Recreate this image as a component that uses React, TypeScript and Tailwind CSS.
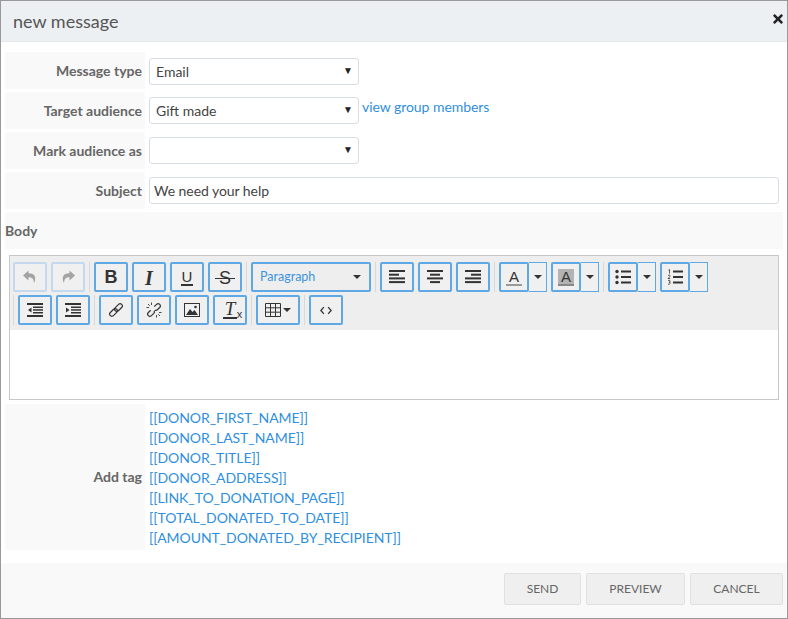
import type { ReactNode } from 'react'
import { FaTimes } from 'react-icons/fa'

const tags = [
  '[[DONOR_FIRST_NAME]]',
  '[[DONOR_LAST_NAME]]',
  '[[DONOR_TITLE]]',
  '[[DONOR_ADDRESS]]',
  '[[LINK_TO_DONATION_PAGE]]',
  '[[TOTAL_DONATED_TO_DATE]]',
  '[[AMOUNT_DONATED_BY_RECIPIENT]]',
]

function Caret() {
  return <span className="h-0 w-0 border-x-[4px] border-t-[4px] border-x-transparent border-t-[#333]" />
}

function Sep() {
  return <div className="mx-[4px] h-[30px] w-px bg-[#d9d9d9]" />
}

function Btn(props: { children: ReactNode; disabled?: boolean; w?: string }) {
  return (
    <button
      className={`flex h-[30px] items-center justify-center rounded-[2px] border-2 bg-[#f0f0f0] text-[#333] ${props.w ?? 'w-[34px]'} ${
        props.disabled ? 'border-[#c4d9ee]' : 'border-[#5fa8e6]'
      }`}
    >
      {props.children}
    </button>
  )
}

function SplitBtn(props: { children: ReactNode }) {
  return (
    <div className="flex">
      <Btn w="w-[30px]">{props.children}</Btn>
      <div className="flex h-[30px] w-[18px] items-center justify-center border border-l-0 border-[#5fa8e6] bg-[#f0f0f0]">
        <Caret />
      </div>
    </div>
  )
}

function Lines(props: { rows: [number, number][] }) {
  return (
    <svg width="16" height="16" viewBox="0 0 16 16" fill="#333">
      {props.rows.map(([x, w], i) => (
        <rect key={i} x={x} y={1 + i * 3.7} width={w} height="2" />
      ))}
    </svg>
  )
}

function Indent(props: { out?: boolean }) {
  return (
    <svg width="16" height="16" viewBox="0 0 16 16" fill="#333">
      <rect x="0" y="1" width="16" height="2" />
      <rect x="6" y="4.500" width="10" height="1.500" />
      <rect x="6" y="7.200" width="10" height="1.500" />
      <rect x="6" y="10" width="10" height="1.500" />
      <rect x="0" y="13" width="16" height="2" />
      <path d={props.out ? 'M4.500 5.500v5L1 8z' : 'M1 5.500v5L4.500 8z'} />
    </svg>
  )
}

function ListIcon(props: { numbered?: boolean }) {
  return (
    <svg width="16" height="16" viewBox="0 0 16 16" fill="#333">
      <rect x="6" y="1.500" width="10" height="2" />
      <rect x="6" y="7" width="10" height="2" />
      <rect x="6" y="12.500" width="10" height="2" />
      {props.numbered ? (
        <g fill="none" stroke="#333" strokeWidth="0.800">
          <path d="M1.500 1l1-.5v4" />
          <path d="M1 6.500q1.500-1 2 0t-2 3h2.200" />
          <path d="M1 11.500q2-1 2 .7t-1 .8q1.500 0 1 1.500t-2 .5" />
        </g>
      ) : (
        <g>
          <circle cx="2" cy="2.500" r="1.700" />
          <circle cx="2" cy="8" r="1.700" />
          <circle cx="2" cy="13.500" r="1.700" />
        </g>
      )}
    </svg>
  )
}

function UndoIcon(props: { redo?: boolean }) {
  return (
    <svg width="16" height="16" viewBox="0 0 16 16" fill="#a3a3a3" className={props.redo ? '-scale-x-100' : ''}>
      <path d="M6.500 1.500L1 6.500l5.500 5V8.300c3.500 0 5.200 1.500 5.500 6 2.500-5.500 1.500-10-5.500-10z" />
    </svg>
  )
}

function FieldRow(props: { label: string; children: ReactNode }) {
  return (
    <div className="flex h-[37px] items-center">
      <div className="flex h-full w-[140px] shrink-0 items-center justify-end bg-[#f9f9f9] pr-[3px] text-[14px] font-bold text-[#666]">
        {props.label}
      </div>
      <div className="flex min-w-0 flex-1 items-center pl-[4px]">{props.children}</div>
    </div>
  )
}

function Select(props: { value?: string; className?: string }) {
  return (
    <div
      className={`flex w-[210px] items-center justify-between rounded-[3px] border border-[#d8dde3] bg-white pr-[5px] pl-[6px] text-[14px] text-[#444] ${props.className ?? 'h-[27px]'}`}
    >
      <span>{props.value}</span>
      <span className="mb-[4px] text-[10px] leading-none text-[#222]">▼</span>
    </div>
  )
}

export default function App() {
  return (
    <div className="flex h-[619px] w-[788px] flex-col border border-[#999] bg-white font-['Lato',sans-serif]">
      <div className="flex h-[41px] shrink-0 items-center justify-between border-b border-[#e6e8ea] bg-[#edf0f3] pr-[2px] pb-[4px] pl-[12px]">
        <h1 className="mt-[4px] text-[18px] text-[#555]">new message</h1>
        <FaTimes size={14} className="text-[#222]" />
      </div>

      <div className="flex flex-1 flex-col gap-[3px] pt-[10px] pr-[4px] pl-[4px]">
        <FieldRow label="Message type">
          <Select value="Email" className="mt-[2px] h-[27px]" />
        </FieldRow>
        <FieldRow label="Target audience">
          <Select value="Gift made" />
          <a className="mb-[9px] ml-[3px] text-[14px] tracking-[-0.05px] text-[#2f8fe0]">view group members</a>
        </FieldRow>
        <FieldRow label="Mark audience as">
          <Select />
        </FieldRow>
        <FieldRow label="Subject">
          <div className="flex h-[27px] w-[630px] items-center rounded-[3px] border border-[#d8dde3] pl-[4px] text-[14px] tracking-[-0.05px] text-[#444]">
            We need your help
          </div>
        </FieldRow>
        <div className="flex h-[37px] items-center bg-[#f9f9f9] text-[14px] font-bold text-[#666]">Body</div>

        <div className="mt-[3px] mr-[4px] ml-[4px] flex h-[145px] flex-col border border-[#c8c8c8]">
          <div className="flex h-[74px] flex-col gap-[3px] bg-[#eeeeee] pt-[6px] pl-[3px]">
            <div className="flex items-center">
              <div className="flex gap-[4px]">
                <Btn disabled>
                  <UndoIcon />
                </Btn>
                <Btn disabled>
                  <UndoIcon redo />
                </Btn>
              </div>
              <Sep />
              <div className="flex gap-[4px]">
                <Btn>
                  <span className="pt-px font-['Liberation_Sans',sans-serif] text-[18px] font-bold">B</span>
                </Btn>
                <Btn>
                  <span className="pt-px font-['Liberation_Serif',serif] text-[20px] font-bold italic">I</span>
                </Btn>
                <Btn>
                  <span className="mt-px border-b-2 border-[#333] px-px font-['Liberation_Sans',sans-serif] text-[15px] leading-[15px]">U</span>
                </Btn>
                <Btn>
                  <span className="relative mt-px font-['Liberation_Sans',sans-serif] text-[18px] leading-none">
                    S
                    <span className="absolute top-[9px] left-[-4px] h-px w-[20px] bg-[#333]" />
                  </span>
                </Btn>
              </div>
              <Sep />
              <div className="flex h-[30px] w-[120px] items-center justify-between rounded-[2px] border-2 border-[#5fa8e6] pr-[8px] pl-[7px] text-[12.5px] text-[#3d94de]">
                <span className="pt-px">Paragraph</span>
                <Caret />
              </div>
              <Sep />
              <div className="flex gap-[4px]">
                <Btn>
                  <Lines rows={[[0, 16], [0, 10], [0, 16], [0, 16]]} />
                </Btn>
                <Btn>
                  <Lines rows={[[0, 16], [3, 10], [0, 16], [3, 10]]} />
                </Btn>
                <Btn>
                  <Lines rows={[[0, 16], [6, 10], [0, 16], [0, 16]]} />
                </Btn>
              </div>
              <Sep />
              <div className="flex gap-[4px]">
                <SplitBtn>
                  <span className="mt-px w-[16px] border-b-2 border-[#999] text-center font-['Liberation_Sans',sans-serif] text-[15px] leading-[15px]">A</span>
                </SplitBtn>
                <SplitBtn>
                  <span className="mt-px w-[16px] border-b-2 border-[#888] bg-[#b3b3b3] text-center font-['Liberation_Sans',sans-serif] text-[15px] leading-[15px]">A</span>
                </SplitBtn>
              </div>
              <Sep />
              <div className="flex gap-[4px]">
                <SplitBtn>
                  <ListIcon />
                </SplitBtn>
                <SplitBtn>
                  <ListIcon numbered />
                </SplitBtn>
              </div>
            </div>
            <div className="flex items-center">
              <div className="mr-[4px] h-[30px] w-px bg-[#d9d9d9]" />
              <div className="flex gap-[4px]">
                <Btn>
                  <Indent out />
                </Btn>
                <Btn>
                  <Indent />
                </Btn>
              </div>
              <Sep />
              <div className="flex gap-[4px]">
                <Btn>
                  <svg width="16" height="16" viewBox="0 0 16 16" fill="none" stroke="#333" strokeWidth="1.200">
                    <g transform="rotate(-45 8 8)">
                      <rect x="0" y="5.800" width="9" height="4.400" rx="2.200" />
                      <rect x="7" y="5.800" width="9" height="4.400" rx="2.200" />
                    </g>
                  </svg>
                </Btn>
                <Btn>
                  <svg width="16" height="16" viewBox="0 0 16 16" fill="none" stroke="#333" strokeWidth="1.200">
                    <g transform="rotate(-45 8 8)">
                      <path d="M5.500 5.800H2.200a2.200 2.200 0 000 4.400h3.300a2.200 2.200 0 002-1.500M10.500 5.800h3.300a2.200 2.200 0 010 4.400h-3.300a2.200 2.200 0 01-2-1.500" />
                    </g>
                    <path d="M5.500 .5v2.500M.5 5.500H3M10.500 15.500V13M15.500 10.500H13M2 2l1.800 1.800M14 14l-1.800-1.800" strokeWidth="0.900" />
                  </svg>
                </Btn>
                <Btn>
                  <svg width="16" height="14" viewBox="0 0 16 14">
                    <rect x="0.500" y="0.500" width="15" height="13" fill="none" stroke="#333" />
                    <path d="M2 12l4-6 2.500 3 2-2 3.500 5z" fill="#333" />
                    <circle cx="11.500" cy="4" r="1.300" fill="#333" />
                  </svg>
                </Btn>
                <Btn>
                  <span className="relative -mt-[4px] font-['Liberation_Serif',serif] text-[19px] leading-none italic">
                    T
                    <span className="absolute top-[18px] left-[-2px] h-[2px] w-[14px] bg-[#333]" />
                    <span className="absolute top-[10px] left-[12px] font-['Liberation_Sans',sans-serif] text-[11px] not-italic">x</span>
                  </span>
                </Btn>
              </div>
              <Sep />
              <Btn w="w-[44px]">
                <span className="flex items-center gap-[2px]">
                  <svg width="16" height="14" viewBox="0 0 16 14" fill="none" stroke="#333">
                    <path d="M.5.500h15v13H.5zM.5 4.800h15M.5 9.200h15M5.500.500v13M10.500.500v13" />
                  </svg>
                  <Caret />
                </span>
              </Btn>
              <Sep />
              <Btn>
                <svg width="12" height="9" viewBox="0 0 14 10" fill="none" stroke="#333" strokeWidth="1.500">
                  <path d="M4.500 1L1 5l3.500 4M9.500 1L13 5 9.500 9" />
                </svg>
              </Btn>
            </div>
          </div>
          <div className="flex-1 bg-white" />
        </div>

        <div className="mt-px flex h-[146px] items-center">
          <div className="flex h-full w-[140px] shrink-0 items-center justify-end bg-[#f9f9f9] pr-[3px] pb-[2px] text-[14px] font-bold text-[#666]">
            Add tag
          </div>
          <div className="flex flex-col pt-[2px] pl-[4px] text-[14px] leading-[20px] tracking-[-0.06px] text-[#2f8fe0]">
            {tags.map((t) => (
              <a key={t}>{t}</a>
            ))}
          </div>
        </div>
      </div>

      <div className="flex h-[55px] shrink-0 items-start justify-end gap-[5px] bg-[#f9f9f9] pt-[10px] pr-[4px]">
        {['SEND', 'PREVIEW', 'CANCEL'].map((b) => (
          <button
            key={b}
            className={`h-[32px] rounded-[2px] border border-[#e0e0e0] bg-[#efefef] text-[12px] text-[#666] ${
              b === 'SEND' ? 'w-[77px]' : b === 'PREVIEW' ? 'w-[99px]' : 'w-[93px]'
            }`}
          >
            {b}
          </button>
        ))}
      </div>
    </div>
  )
}
